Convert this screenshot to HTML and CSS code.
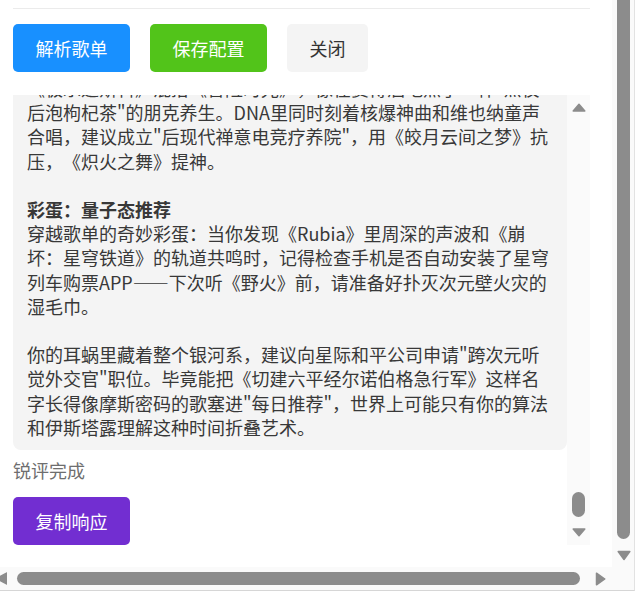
FILE: index.html
```html
<!DOCTYPE html>
<html lang="zh-CN">
<head>
    <meta charset="UTF-8">
    <meta name="viewport" content="width=device-width, initial-scale=1.0">
    <title>歌单锐评</title>
    <link rel="stylesheet" href="styles.css">
</head>
<body>
    <div class="window">
        <div class="viewport">
            <div class="rule"></div>
            <div class="actions">
                <button class="btn btn-blue">解析歌单</button>
                <button class="btn btn-green">保存配置</button>
                <button class="btn btn-plain">关闭</button>
            </div>
            <div class="panel">
                <div class="panel-body">
                    <div class="result">《极乐迪斯科》混搭《冒险时光》，像在赛博酒吧点了一杯"熬夜
后泡枸杞茶"的朋克养生。DNA里同时刻着核爆神曲和维也纳童声合唱，建议成立"后现代禅意电竞疗养院"，用《皎月云间之梦》抗压，《炽火之舞》提神。

<strong>彩蛋：量子态推荐</strong>
穿越歌单的奇妙彩蛋：当你发现《Rubia》里周深的声波和《崩坏：星穹铁道》的轨道共鸣时，记得检查手机是否自动安装了星穹列车购票APP——下次听《野火》前，请准备好扑灭次元壁火灾的湿毛巾。

你的耳蜗里藏着整个银河系，建议向星际和平公司申请"跨次元听觉外交官"职位。毕竟能把《切建六平经尔诺伯格急行军》这样名字长得像摩斯密码的歌塞进"每日推荐"，世界上可能只有你的算法和伊斯塔露理解这种时间折叠艺术。</div>
                    <div class="status">锐评完成</div>
                    <button class="btn btn-purple">复制响应</button>
                </div>
                <div class="vbar vbar-inner">
                    <svg class="arrow" width="14" height="9" viewBox="0 0 14 9"><path d="M7 1.2 L12.8 8 H1.2 Z"/></svg>
                    <div class="spacer"></div>
                    <div class="thumb thumb-short"></div>
                    <svg class="arrow" width="14" height="9" viewBox="0 0 14 9"><path d="M1.2 1 H12.8 L7 7.8 Z"/></svg>
                </div>
            </div>
        </div>
        <div class="vbar vbar-outer">
            <div class="thumb thumb-long"></div>
            <svg class="arrow" width="14" height="11" viewBox="0 0 14 11"><path d="M1.2 1.5 H12.8 L7 9.5 Z"/></svg>
        </div>
        <div class="hbar">
            <svg class="arrow" width="7" height="13" viewBox="0 0 7 13"><path d="M7 1 V12 L-3.5 6.5 Z"/></svg>
            <div class="hthumb"></div>
            <svg class="arrow arrow-right" width="11" height="14" viewBox="0 0 11 14"><path d="M1.5 1.2 V12.8 L9.8 7 Z"/></svg>
        </div>
        <div class="corner"></div>
    </div>
</body>
</html>
```

FILE: styles.css
```css
body {
    margin: 0;
    background-color: #ffffff;
    font-family: "Noto Sans CJK SC", "Noto Sans", sans-serif;
    color: #333333;
    overflow: hidden;
    text-spacing-trim: space-all;
}
.window {
    display: grid;
    grid-template-columns: 612px 22px;
    grid-template-rows: 567px 23px;
    width: max-content;
    border-right: 1px solid #e2e2e2;
    border-bottom: 1px solid #d6d6d6;
}
.viewport {
    overflow: hidden;
    padding: 8px 22px 0 13px;
    display: flex;
    flex-direction: column;
}
.rule {
    border-top: 1px solid #ebebeb;
}
.actions {
    display: flex;
    gap: 20px;
    margin-top: 15px;
}
.btn {
    height: 48px;
    padding: 0 22.5px;
    border: 0;
    border-radius: 5px;
    font-family: "Noto Sans CJK SC", sans-serif;
    font-size: 18px;
    color: #ffffff;
    cursor: pointer;
}
.btn-blue {
    background-color: #1890ff;
}
.btn-green {
    background-color: #52c41a;
}
.btn-plain {
    background-color: #f4f4f4;
    color: #333333;
}
.btn-purple {
    background-color: #722ed1;
    align-self: flex-start;
    flex-shrink: 0;
}
.panel {
    display: flex;
    height: 450px;
    margin-top: 23px;
}
.panel-body {
    flex: 1;
    overflow: hidden;
    display: flex;
    flex-direction: column;
    justify-content: flex-end; /* scrolled to the end */
}
.result {
    flex-shrink: 0;
    background-color: #f4f4f4;
    border-radius: 8px;
    padding: 8px 12px 11px 14px;
    white-space: pre-wrap;
    font-size: 18px;
    line-height: 24.2px;
    color: #383838;
}
.status {
    flex-shrink: 0;
    margin: 8px 0 15px;
    font-size: 18px;
    line-height: 24px;
    color: #6e6e6e;
}
.vbar {
    display: flex;
    flex-direction: column;
    align-items: flex-start;
    background-color: #fafafa;
    padding-left: 5px;
}
.vbar-inner {
    width: 23px;
    box-sizing: border-box;
    padding-top: 8px;
    padding-bottom: 8px;
}
.vbar-outer {
    padding-bottom: 6px;
}
.spacer {
    flex: 1;
}
.thumb {
    width: 13px;
    background-color: #8c8c8c;
    border-radius: 7px;
}
.thumb-short {
    height: 25px;
    margin-bottom: 11px;
}
.thumb-long {
    flex: 1;
    border-radius: 0 0 7px 7px;
    margin-bottom: 11px;
}
.arrow path {
    fill: #8c8c8c;
    stroke: #8c8c8c;
    stroke-width: 1.5;
    stroke-linejoin: round;
}
.hbar {
    display: flex;
    align-items: center;
    background-color: #fafafa;
}
.hthumb {
    width: 563px;
    height: 13px;
    margin-left: 10px;
    background-color: #8c8c8c;
    border-radius: 7px;
}
.arrow-right {
    margin-left: 15px;
}
.corner {
    background-color: #fafafa;
}
```
